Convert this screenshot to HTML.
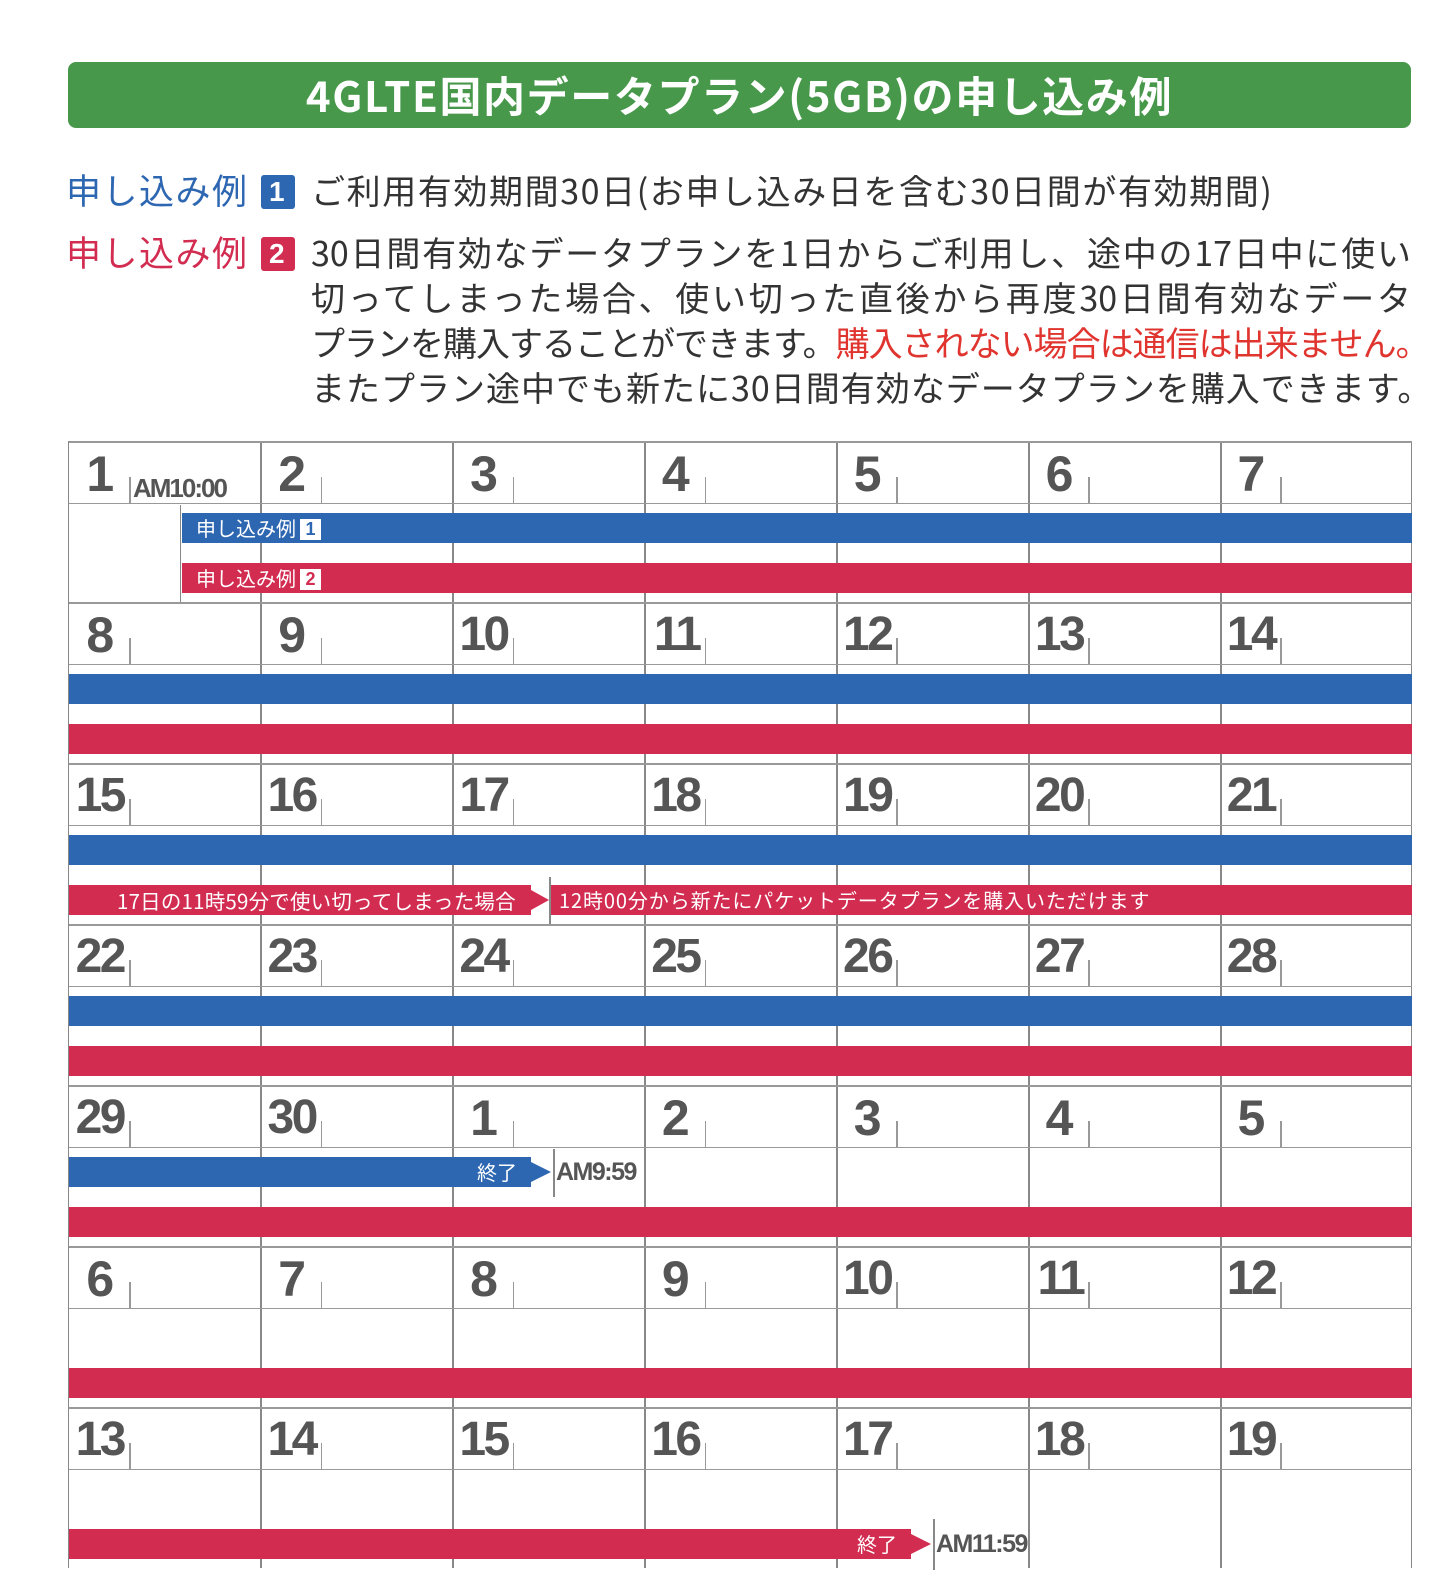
<!DOCTYPE html>
<html><head><meta charset="utf-8">
<style>
*{margin:0;padding:0;box-sizing:border-box}
body{width:1450px;height:1568px;background:#fff;position:relative;overflow:hidden;font-family:"Liberation Sans","Noto Sans CJK JP",sans-serif;color:#333}
.abs{position:absolute}
.title{left:68px;top:62px;width:1343px;height:66px;background:#47984a;border-radius:8px;color:#fff;font-family:"Noto Sans CJK JP",sans-serif;font-weight:bold;font-size:42px;line-height:66px;text-align:center;letter-spacing:1.6px}
.lbl{font-family:"Noto Sans CJK JP",sans-serif;font-size:35px;line-height:40px;white-space:nowrap}
.badge{display:inline-block;width:34px;height:34px;color:#fff;font:bold 28px/34px "Liberation Sans",sans-serif;text-align:center;border-radius:3px;vertical-align:3px;margin-left:12px}
.line{left:311px;width:1100px;font-family:"Noto Sans CJK JP",sans-serif;font-size:34px;line-height:40px;white-space:nowrap;text-align:justify;text-align-last:justify;color:#333}
.grid{left:68px;top:441px;width:1344px;height:1127px;border-left:1.5px solid #888;border-right:1.5px solid #888}
.wk{position:absolute;left:0;width:1343px;height:161px;border-top:2px solid #999}
.vl{position:absolute;top:0;bottom:0;width:1.5px;background:#888}
.dr{position:absolute;left:0;right:0;top:0;height:61px;border-bottom:1.5px solid #999;display:flex}
.c{width:191.86px;height:100%;position:relative}
.n{position:absolute;left:0;top:2px;width:55px;text-align:right;font:bold 48px/58px "Liberation Sans",sans-serif;color:#555;letter-spacing:-2.5px}
.n.s{text-align:center;width:60px;font-size:50px}
.t{position:absolute;left:60px;top:34px;width:1.5px;height:26px;background:#999}
.am{position:absolute;left:64px;top:30px;font:bold 26px/30px "Liberation Sans",sans-serif;color:#555;letter-spacing:-2px}
.bar{position:absolute;height:30px}
.b{background:#2e67b1}.r{background:#d22c51}
.bt{color:#fff;font-family:"Noto Sans CJK JP",sans-serif;font-size:20px;line-height:30px;white-space:nowrap}
.sb{display:inline-block;width:21px;height:21px;background:#fff;font:bold 18px/21px "Liberation Sans",sans-serif;text-align:center;vertical-align:1px;margin-left:4px}
.arr{position:absolute;width:0;height:0;border-top:10px solid transparent;border-bottom:10px solid transparent}
.tm{font:bold 25px/30px "Liberation Sans",sans-serif;color:#555;letter-spacing:-1.5px}
</style></head><body>
<div class="abs title">4GLTE国内データプラン(5GB)の申し込み例</div>

<div class="abs lbl" style="left:66px;top:170px;color:#2e67b1;letter-spacing:1.5px">申し込み例<span class="badge" style="background:#2e67b1">1</span></div>
<div class="abs lbl" style="left:311px;top:170px;color:#333;font-size:34px;letter-spacing:1.6px">ご利用有効期間30日(お申し込み日を含む30日間が有効期間)</div>
<div class="abs lbl" style="left:66px;top:232px;color:#d22c51;letter-spacing:1.5px">申し込み例<span class="badge" style="background:#d22c51">2</span></div>
<div class="abs line" style="top:232px">30日間有効なデータプランを1日からご利用し、途中の17日中に使い</div>
<div class="abs line" style="top:277px">切ってしまった場合、使い切った直後から再度30日間有効なデータ</div>
<div class="abs line" style="top:322px;letter-spacing:-1px">プランを購入することができます。<span style="color:#e0342f">購入されない場合は通信は出来ません。</span></div>
<div class="abs line" style="top:367px;letter-spacing:1px">またプラン途中でも新たに30日間有効なデータプランを購入できます。</div>

<div class="abs grid">
<div class="vl" style="left:191px"></div><div class="vl" style="left:383px"></div><div class="vl" style="left:575px"></div><div class="vl" style="left:767px"></div><div class="vl" style="left:959px"></div><div class="vl" style="left:1151px"></div>

<div class="wk" style="top:0">
<div class="dr"><div class="c"><div class="n s">1</div><i class="t"></i><span class="am">AM10:00</span></div><div class="c"><div class="n s">2</div><i class="t"></i></div><div class="c"><div class="n s">3</div><i class="t"></i></div><div class="c"><div class="n s">4</div><i class="t"></i></div><div class="c"><div class="n s">5</div><i class="t"></i></div><div class="c"><div class="n s">6</div><i class="t"></i></div><div class="c"><div class="n s">7</div><i class="t"></i></div></div>
<div style="position:absolute;left:0;top:62px;width:112px;height:97px;background:#fff;border-right:1.5px solid #888"></div>
<div class="bar b bt" style="left:113px;right:0;top:70px;padding-left:14px">申し込み例<span class="sb" style="color:#2e67b1">1</span></div>
<div class="bar r bt" style="left:113px;right:0;top:120px;padding-left:14px">申し込み例<span class="sb" style="color:#d22c51">2</span></div>
</div>

<div class="wk" style="top:161px">
<div class="dr"><div class="c"><div class="n s">8</div><i class="t"></i></div><div class="c"><div class="n s">9</div><i class="t"></i></div><div class="c"><div class="n">10</div><i class="t"></i></div><div class="c"><div class="n">11</div><i class="t"></i></div><div class="c"><div class="n">12</div><i class="t"></i></div><div class="c"><div class="n">13</div><i class="t"></i></div><div class="c"><div class="n">14</div><i class="t"></i></div></div>
<div class="bar b" style="left:0;right:0;top:70px"></div>
<div class="bar r" style="left:0;right:0;top:120px"></div>
</div>

<div class="wk" style="top:322px">
<div class="dr"><div class="c"><div class="n">15</div><i class="t"></i></div><div class="c"><div class="n">16</div><i class="t"></i></div><div class="c"><div class="n">17</div><i class="t"></i></div><div class="c"><div class="n">18</div><i class="t"></i></div><div class="c"><div class="n">19</div><i class="t"></i></div><div class="c"><div class="n">20</div><i class="t"></i></div><div class="c"><div class="n">21</div><i class="t"></i></div></div>
<div class="bar b" style="left:0;right:0;top:70px"></div>
<div class="bar r bt" style="left:0;width:462px;top:120px;padding-left:48px;font-size:20.5px;letter-spacing:0.2px">17日の11時59分で使い切ってしまった場合</div>
<div class="arr" style="left:462px;top:125px;border-left:18px solid #d22c51"></div>
<div style="position:absolute;left:480px;top:112px;width:1.5px;height:47px;background:#888"></div>
<div class="bar r bt" style="left:482px;right:0;top:120px;padding-left:8px;letter-spacing:0.9px">12時00分から新たにパケットデータプランを購入いただけます</div>
</div>

<div class="wk" style="top:483px">
<div class="dr"><div class="c"><div class="n">22</div><i class="t"></i></div><div class="c"><div class="n">23</div><i class="t"></i></div><div class="c"><div class="n">24</div><i class="t"></i></div><div class="c"><div class="n">25</div><i class="t"></i></div><div class="c"><div class="n">26</div><i class="t"></i></div><div class="c"><div class="n">27</div><i class="t"></i></div><div class="c"><div class="n">28</div><i class="t"></i></div></div>
<div class="bar b" style="left:0;right:0;top:70px"></div>
<div class="bar r" style="left:0;right:0;top:120px"></div>
</div>

<div class="wk" style="top:644px">
<div class="dr"><div class="c"><div class="n">29</div><i class="t"></i></div><div class="c"><div class="n">30</div><i class="t"></i></div><div class="c"><div class="n s">1</div><i class="t"></i></div><div class="c"><div class="n s">2</div><i class="t"></i></div><div class="c"><div class="n s">3</div><i class="t"></i></div><div class="c"><div class="n s">4</div><i class="t"></i></div><div class="c"><div class="n s">5</div><i class="t"></i></div></div>
<div class="bar b bt" style="left:0;width:462px;top:70px;text-align:right;padding-right:14px">終了</div>
<div class="arr" style="left:462px;top:75px;border-left:20px solid #2e67b1"></div>
<div style="position:absolute;left:484px;top:62px;width:1.5px;height:48px;background:#888"></div>
<div class="abs tm" style="left:487px;top:70px">AM9:59</div>
<div class="bar r" style="left:0;right:0;top:120px"></div>
</div>

<div class="wk" style="top:805px">
<div class="dr"><div class="c"><div class="n s">6</div><i class="t"></i></div><div class="c"><div class="n s">7</div><i class="t"></i></div><div class="c"><div class="n s">8</div><i class="t"></i></div><div class="c"><div class="n s">9</div><i class="t"></i></div><div class="c"><div class="n">10</div><i class="t"></i></div><div class="c"><div class="n">11</div><i class="t"></i></div><div class="c"><div class="n">12</div><i class="t"></i></div></div>
<div class="bar r" style="left:0;right:0;top:120px"></div>
</div>

<div class="wk" style="top:966px">
<div class="dr"><div class="c"><div class="n">13</div><i class="t"></i></div><div class="c"><div class="n">14</div><i class="t"></i></div><div class="c"><div class="n">15</div><i class="t"></i></div><div class="c"><div class="n">16</div><i class="t"></i></div><div class="c"><div class="n">17</div><i class="t"></i></div><div class="c"><div class="n">18</div><i class="t"></i></div><div class="c"><div class="n">19</div><i class="t"></i></div></div>
<div class="bar r bt" style="left:0;width:842px;top:120px;text-align:right;padding-right:14px">終了</div>
<div class="arr" style="left:842px;top:125px;border-left:20px solid #d22c51"></div>
<div style="position:absolute;left:864px;top:110px;width:1.5px;height:51px;background:#888"></div>
<div class="abs tm" style="left:867px;top:120px">AM11:59</div>
</div>
</div>
</body></html>
